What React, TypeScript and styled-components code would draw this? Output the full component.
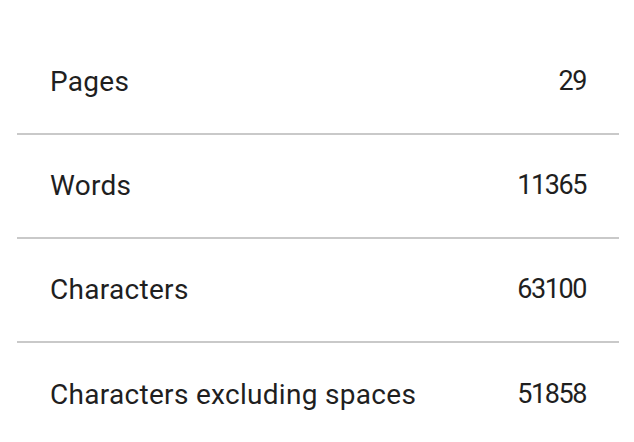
import React from 'react';
import styled, { createGlobalStyle } from 'styled-components';

const GlobalStyle = createGlobalStyle`
  body {
    margin: 0;
    background: #ffffff;
    font-family: Roboto, "Noto Sans", Arial, sans-serif;
  }
`;

const stats = [
  { label: 'Pages', value: '29' },
  { label: 'Words', value: '11365' },
  { label: 'Characters', value: '63100' },
  { label: 'Characters excluding spaces', value: '51858' }
];

const App: React.FC = () => {
  return (
    <>
      <GlobalStyle />
      <Container>
        {stats.map((s) => (
          <Row key={s.label}>
            <Label>{s.label}</Label>
            <Value>{s.value}</Value>
          </Row>
        ))}
      </Container>
    </>
  );
};

export default App;

const Container = styled.div`
  margin: 31px 15px 0 17px;
`;

const Row = styled.div`
  box-sizing: border-box;
  display: flex;
  align-items: center;
  justify-content: space-between;
  height: 104px;
  padding: 0 33px 2px;
  border-bottom: 2px solid #c9c9c9;

  &:last-child {
    border-bottom: none;
  }
`;

const Label = styled.span`
  color: #1f1f1f;
  font-size: 28px;
  letter-spacing: 0.3px;
`;

const Value = styled.span`
  color: #1f1f1f;
  font-size: 27px;
  letter-spacing: -1.4px;
`;
